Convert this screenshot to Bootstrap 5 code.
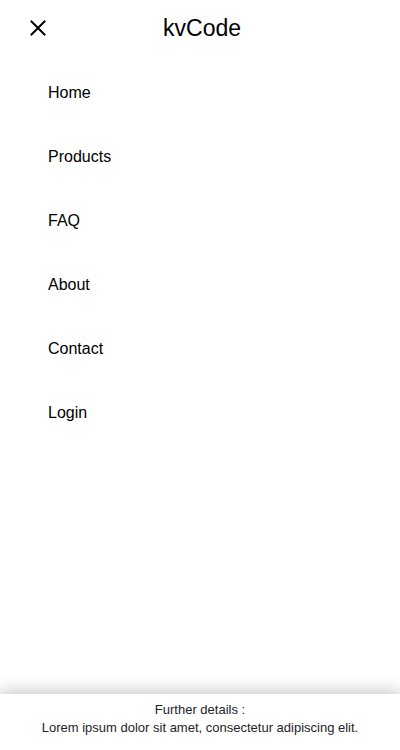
<!DOCTYPE html>
<html lang="en">
<head>
<meta charset="utf-8">
<meta name="viewport" content="width=device-width, initial-scale=1">
<title>kvCode</title>
<link href="https://cdn.jsdelivr.net/npm/bootstrap@5.3.0/dist/css/bootstrap.min.css" rel="stylesheet">
<style>
body{font-family:"Liberation Sans",Arial,sans-serif;color:#000;background:#fff}
.brand-title{font-size:23px;line-height:32px;color:#000;font-weight:400}
.site-header{min-height:56px}
.menu-list{padding-top:5px}
.menu-link{font-size:16px;line-height:24px;color:#000;font-weight:400;padding:20px 48px}
.details-bar{font-size:13px;line-height:18px;color:#212529;padding:7px 16px 13px;box-shadow:0 0 20px rgba(0,0,0,.3)}
.close-btn{width:24px;height:24px}
</style>
</head>
<body class="min-vh-100 d-flex flex-column overflow-x-hidden">
<header class="site-header row g-0 align-items-center ps-1">
  <div class="col d-flex">
    <button type="button" class="close-btn btn p-0 border-0 d-flex ms-4" aria-label="Close menu">
      <svg width="20" height="24" viewBox="0 0 20 24" fill="none" stroke="#000" stroke-width="2" aria-hidden="true"><path d="M2.8 4.8l14.4 14.4M17.2 4.8L2.8 19.2"/></svg>
    </button>
  </div>
  <div class="col-auto"><a href="#" class="brand-title text-decoration-none">kvCode</a></div>
  <div class="col"></div>
</header>
<nav class="menu-list nav flex-column" aria-label="Main">
  <a class="nav-link menu-link" href="#">Home</a>
  <a class="nav-link menu-link" href="#">Products</a>
  <a class="nav-link menu-link" href="#">FAQ</a>
  <a class="nav-link menu-link" href="#">About</a>
  <a class="nav-link menu-link" href="#">Contact</a>
  <a class="nav-link menu-link" href="#">Login</a>
</nav>
<footer class="details-bar mt-auto text-center bg-white">
  <p class="m-0">Further details :</p>
  <p class="m-0">Lorem ipsum dolor sit amet, consectetur adipiscing elit.</p>
</footer>
<script src="https://cdn.jsdelivr.net/npm/bootstrap@5.3.0/dist/js/bootstrap.bundle.min.js"></script>
</body>
</html>
